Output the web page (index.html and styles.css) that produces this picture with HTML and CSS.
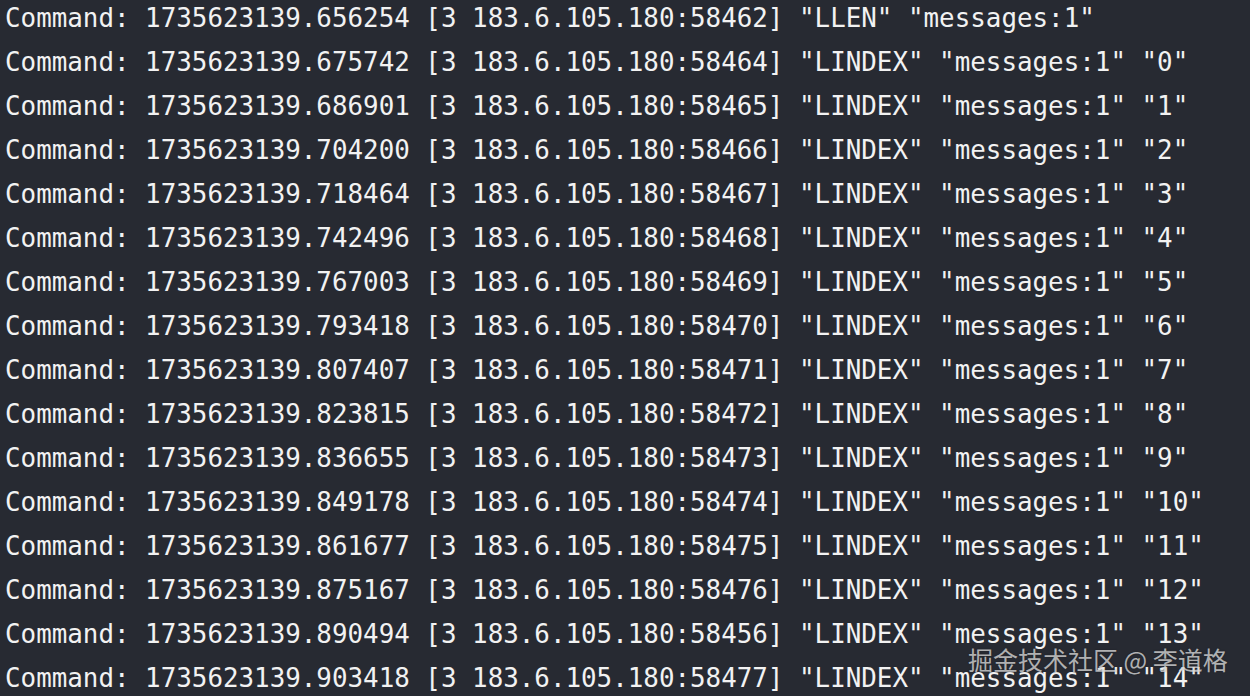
FILE: index.html
```html
<!DOCTYPE html>
<html>
<head>
<meta charset="utf-8">
<link rel="stylesheet" href="styles.css">
</head>
<body>
<div class="term">
<div class="line">Command: 1735623139.656254 [3 183.6.105.180:58462] "LLEN" "messages:1"</div>
<div class="line">Command: 1735623139.675742 [3 183.6.105.180:58464] "LINDEX" "messages:1" "0"</div>
<div class="line">Command: 1735623139.686901 [3 183.6.105.180:58465] "LINDEX" "messages:1" "1"</div>
<div class="line">Command: 1735623139.704200 [3 183.6.105.180:58466] "LINDEX" "messages:1" "2"</div>
<div class="line">Command: 1735623139.718464 [3 183.6.105.180:58467] "LINDEX" "messages:1" "3"</div>
<div class="line">Command: 1735623139.742496 [3 183.6.105.180:58468] "LINDEX" "messages:1" "4"</div>
<div class="line">Command: 1735623139.767003 [3 183.6.105.180:58469] "LINDEX" "messages:1" "5"</div>
<div class="line">Command: 1735623139.793418 [3 183.6.105.180:58470] "LINDEX" "messages:1" "6"</div>
<div class="line">Command: 1735623139.807407 [3 183.6.105.180:58471] "LINDEX" "messages:1" "7"</div>
<div class="line">Command: 1735623139.823815 [3 183.6.105.180:58472] "LINDEX" "messages:1" "8"</div>
<div class="line">Command: 1735623139.836655 [3 183.6.105.180:58473] "LINDEX" "messages:1" "9"</div>
<div class="line">Command: 1735623139.849178 [3 183.6.105.180:58474] "LINDEX" "messages:1" "10"</div>
<div class="line">Command: 1735623139.861677 [3 183.6.105.180:58475] "LINDEX" "messages:1" "11"</div>
<div class="line">Command: 1735623139.875167 [3 183.6.105.180:58476] "LINDEX" "messages:1" "12"</div>
<div class="line">Command: 1735623139.890494 [3 183.6.105.180:58456] "LINDEX" "messages:1" "13"</div>
<div class="line">Command: 1735623139.903418 [3 183.6.105.180:58477] "LINDEX" "messages:1" "14"</div>
</div>
<div class="watermark">掘金技术社区 @ 李道格</div>
</body>
</html>
```
FILE: styles.css
```css
html, body {
  margin: 0;
  padding: 0;
  background: #272a32;
  overflow: hidden;
  height: 696px;
}
.term {
  margin-top: -4px;
  padding-left: 5px;
  font-family: "DejaVu Sans Mono", "Liberation Mono", monospace;
  font-size: 25.86px;
  line-height: 44px;
  color: #f2f2f2;
}
.line {
  white-space: pre;
  height: 44px;
}
.watermark {
  position: absolute;
  left: 968px;
  top: 643px;
  font-family: "Noto Sans CJK SC", "Noto Sans", sans-serif;
  font-size: 25px;
  line-height: 32px;
  color: rgba(225, 225, 225, 0.75);
  text-shadow: 0 0 2px rgba(0, 0, 0, 0.3);
  white-space: pre;
}
```
